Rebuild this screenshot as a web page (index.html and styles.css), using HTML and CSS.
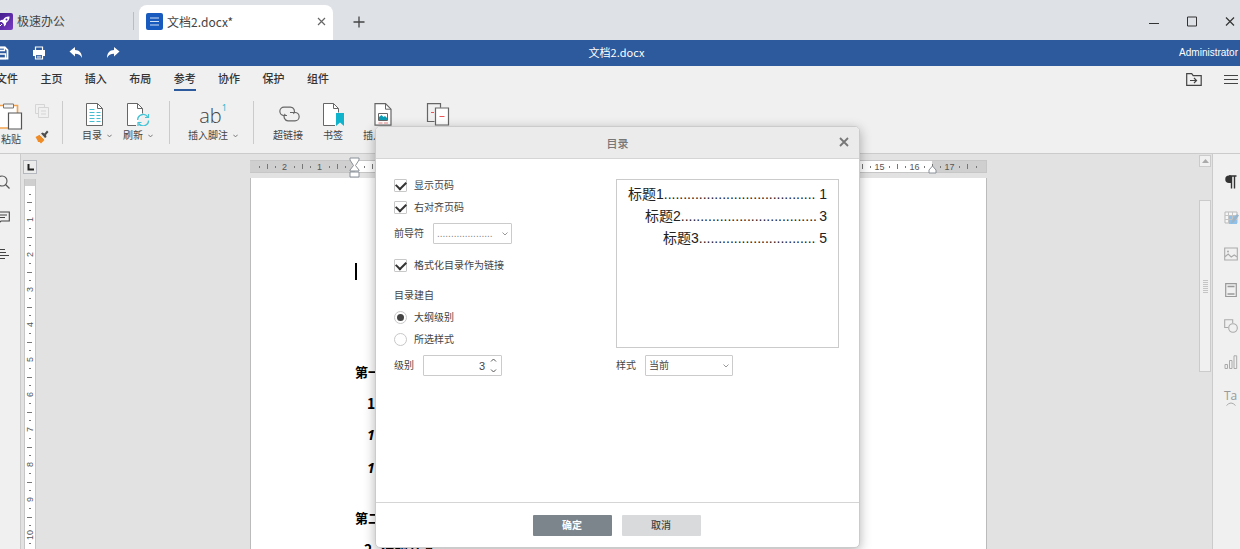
FILE: index.html
```html
<!DOCTYPE html>
<html lang="zh-CN">
<head>
<meta charset="utf-8">
<title>文档2.docx</title>
<link rel="stylesheet" href="styles.css">
</head>
<body>
<header class="titlebar">
  <div class="home-tab">
    <svg class="app-icon" viewBox="0 0 17 17"><defs><linearGradient id="pg" x1="0" y1="0" x2="1" y2="1"><stop offset="0" stop-color="#3c1a86"/><stop offset="1" stop-color="#7a3cc4"/></linearGradient></defs><rect width="17" height="17" rx="2" fill="url(#pg)"/><path d="M13.5 3.500c-3-.2-5 1-6.300 3.200l-2.400.4-1.300 1.900 2.300.1 2 2 .2 2.400 1.800-1.400.4-2.400c2.300-1.400 3.500-3.300 3.300-6.200z" fill="#fff"/><path d="M4 13l2-2" stroke="#fff"/><circle cx="10.500" cy="6.500" r="1" fill="#5a2ba5"/></svg>
    <span>极速办公</span>
  </div>
  <div class="doc-tab">
    <svg class="app-icon" viewBox="0 0 17 17"><rect width="17" height="17" rx="2" fill="#185abd"/><path d="M4 5h9M4 8.500h9M4 12h9" stroke="#cfe0f7" stroke-width="1.200"/></svg>
    <span>文档2.docx*</span>
    <button class="icon-button tab-close" aria-label="关闭标签"><svg width="9" height="9" viewBox="0 0 9 9"><path d="M1 1l7 7M8 1l-7 7" stroke="#666" stroke-width="1.200"/></svg></button>
  </div>
  <button class="icon-button new-tab" aria-label="新建"><svg width="12" height="12" viewBox="0 0 12 12"><path d="M6 .5v11M.5 6h11" stroke="#444" stroke-width="1.300"/></svg></button>
  <div class="window-controls">
    <button class="icon-button" aria-label="最小化"><svg width="10" height="11" viewBox="0 0 10 11"><path d="M0 7.500h10" stroke="#333"/></svg></button>
    <button class="icon-button" aria-label="最大化"><svg width="10" height="11" viewBox="0 0 10 11"><path d="M.5 1h9v9h-9z" fill="none" stroke="#333"/></svg></button>
    <button class="icon-button" aria-label="关闭"><svg width="10" height="11" viewBox="0 0 10 11"><path d="M1 1.500l8 8M9 1.500l-8 8" stroke="#333" stroke-width="1.200"/></svg></button>
  </div>
</header>

<div class="quickbar">
  <div class="quick-actions">
    <button class="icon-button" aria-label="保存"><svg width="14" height="14" viewBox="0 0 14 14"><path d="M1.500 1.500h8.500l2.500 2.500v8.500h-11z" fill="none" stroke="#fff" stroke-width="1.800"/><path d="M3.500 1.500h6v3h-6zM3.500 8h7v4.500h-7z" fill="none" stroke="#fff" stroke-width="1.300"/></svg></button>
    <button class="icon-button" aria-label="打印"><svg width="14" height="14" viewBox="0 0 14 14"><path d="M3.500 4V1h7v3M3.500 8.500h7v4.500h-7z" fill="none" stroke="#fff" stroke-width="1.200"/><path d="M1 4h12v6h-2V8H3v2H1z" fill="#fff"/><path d="M5 10.300h4M5 11.800h4" stroke="#fff" stroke-width=".7"/></svg></button>
    <button class="icon-button" aria-label="撤销"><svg width="14" height="12" viewBox="0 0 14 12"><path d="M.5 4.500L6 0v3c4.500 0 7 3 7 8-1.500-3-3.500-4.200-7-4.200V9.500z" fill="#fff"/></svg></button>
    <button class="icon-button" aria-label="重做"><svg width="14" height="12" viewBox="0 0 14 12"><path d="M13.500 4.500L8 0v3c-4.500 0-7 3-7 8 1.500-3 3.500-4.200 7-4.200V9.500z" fill="#fff"/></svg></button>
  </div>
  <span class="doc-name">文档2.docx</span>
  <span class="user-name">Administrator</span>
</div>

<nav class="menubar">
  <div class="menu-items">
    <a href="#">文件</a><a href="#">主页</a><a href="#">插入</a><a href="#">布局</a><a href="#" class="active">参考</a><a href="#">协作</a><a href="#">保护</a><a href="#">组件</a>
  </div>
  <div class="menu-right">
    <button class="icon-button" aria-label="打开文件位置"><svg width="16" height="13" viewBox="0 0 16 13"><path d="M.7.7h5l1.500 2h8v9.600H.7z" fill="none" stroke="#444" stroke-width="1.200"/><path d="M4 7.500h6M8 5l2.500 2.500L8 10" fill="none" stroke="#444" stroke-width="1.200"/></svg></button>
    <button class="icon-button" aria-label="更多"><svg width="14" height="10" viewBox="0 0 14 10"><path d="M0 .5h14M0 4.500h14M0 8.500h14" stroke="#444"/></svg></button>
  </div>
</nav>

<div class="toolbar">
  <div class="group group-clip">
    <button class="tool paste"><svg width="24" height="27" viewBox="0 0 24 27"><path d="M0 2.500h18.500V25H0z" fill="#fff" stroke="#f2a34e" stroke-width="1.600"/><path d="M4.500 1h10v4h-10z" fill="#f4f4f4" stroke="#777"/><path d="M9.500 10h13v16h-13z" fill="#fff" stroke="#555" stroke-width="1.200"/></svg><span>粘贴</span></button>
    <div class="small-tools">
      <button class="icon-button" aria-label="复制"><svg width="14" height="14" viewBox="0 0 14 14"><path d="M3.500 9.500h-3v-9h9v3M3.500 3.500h10v10h-10zM6 7h5M6 10h5" fill="none" stroke="#d5d5d5"/></svg></button>
      <button class="icon-button" aria-label="格式刷"><svg width="14" height="14" viewBox="0 0 14 14"><path d="M.5 7L5 4.500l5 5L6 13.500 4.500 12 3 12 2.500 10.500z" fill="#f08c28"/><path d="M6 3.500l1.500-1 2 1L12 .5l1.500 1.500-2.500 3 .5 2L10 8z" fill="#505050"/><path d="M4.500 4.500l5.500 5.500" stroke="#fff" stroke-width=".8"/></svg></button>
    </div>
  </div>
  <div class="group group-toc">
    <button class="tool"><svg width="24" height="23" viewBox="0 0 24 23"><path d="M1.500.5h11l5 5v17h-16z" fill="#fff" stroke="#666"/><path d="M12.500.5v5h5" fill="none" stroke="#666"/><path d="M4.500 6.500h5M4.500 9.500h5M4.500 12.500h5M4.500 15.500h5M4.500 18.500h5M11.500 9.500h4M11.500 12.500h4M11.500 15.500h4M11.500 18.500h4" stroke="#45bdd0" stroke-width="1.100"/></svg><span>目录<svg class="chev" width="5" height="4" viewBox="0 0 5 4"><path d="M.3.7l2.200 2.200L4.700.7" fill="none" stroke="#777"/></svg></span></button>
    <button class="tool"><svg width="24" height="23" viewBox="0 0 24 23"><path d="M10 22.500H1.500V.5h10l5 5v5" fill="#fff" stroke="#666"/><path d="M11.500.5v5h5" fill="none" stroke="#666"/><path d="M11.700 17a5.500 5.500 0 0 1 10-3.200M22.600 17.500a5.500 5.500 0 0 1-10 3" fill="none" stroke="#45c4d6" stroke-width="1.400"/><path d="M22.500 11v3.500h-3.500M12 23v-3.500h3.500" fill="none" stroke="#45c4d6" stroke-width="1.200"/></svg><span>刷新<svg class="chev" width="5" height="4" viewBox="0 0 5 4"><path d="M.3.7l2.200 2.200L4.700.7" fill="none" stroke="#777"/></svg></span></button>
  </div>
  <div class="group group-note">
    <button class="tool"><span class="ab-icon">ab<sup>1</sup></span><span>插入脚注<svg class="chev" width="5" height="4" viewBox="0 0 5 4"><path d="M.3.7l2.200 2.200L4.700.7" fill="none" stroke="#777"/></svg></span></button>
  </div>
  <div class="group group-link">
    <button class="tool"><svg width="24" height="23" viewBox="0 0 24 23"><path d="M11 12.500H8a4 4 0 0 1 0-8.300h6.500a4 4 0 0 1 3 6.600" fill="none" stroke="#666" stroke-width="1.200"/><path d="M14 9.500h5a4 4 0 0 1 0 8.300h-7a4 4 0 0 1-2.800-6.800" fill="none" stroke="#666" stroke-width="1.200"/></svg><span>超链接</span></button>
    <button class="tool"><svg width="24" height="23" viewBox="0 0 24 23"><path d="M14 22.500H2.500V.5h10l5 5v4" fill="#fff" stroke="#666"/><path d="M12.500.5v5h5" fill="none" stroke="#666"/><path d="M15 10h8v13l-4-3.500-4 3.500z" fill="#0fb3cc"/></svg><span>书签</span></button>
    <button class="tool"><svg width="18" height="23" viewBox="0 0 18 23"><path d="M1 .7h10.500l5.500 5.500v16H1z" fill="#fff" stroke="#666" stroke-width="1.200"/><path d="M11.500.7v5.500H17" fill="none" stroke="#666"/><path d="M4.500 10.500h9v7h-9z" fill="#fff" stroke="#666"/><path d="M5 17v-3l2.500-2 2 2 1.500-1 2 2v2z" fill="#0b9db5"/><path d="M4.500 20h4M10 20h4" stroke="#e88"/></svg><span>插入图表</span></button>
    <button class="tool cross" aria-label="比较"><svg width="24" height="23" viewBox="0 0 24 23"><path d="M8.500 18.500h-7V.7h13v4" fill="none" stroke="#666" stroke-width="1.200"/><path d="M9.500 5h13v17h-13z" fill="#fff" stroke="#666" stroke-width="1.200"/><path d="M5 9.500h3M13.500 13.500h5" stroke="#e55"/></svg></button>
  </div>
</div>

<main class="workspace">
  <aside class="left-rail">
    <button class="icon-button" aria-label="查找"><svg width="14" height="14" viewBox="0 0 14 14"><circle cx="6" cy="6" r="5" fill="none" stroke="#555" stroke-width="1.100"/><path d="M9.500 9.500l4 4" stroke="#555" stroke-width="1.200"/></svg></button>
    <button class="icon-button" aria-label="批注"><svg width="14" height="14" viewBox="0 0 14 14"><path d="M0 1h13.300v9H5l-3 3v-3H0" fill="none" stroke="#444" stroke-width="1.100"/><path d="M1 4h10M1 6.500h8" stroke="#444"/></svg></button>
    <button class="icon-button" aria-label="导航"><svg width="14" height="14" viewBox="0 0 14 14"><path d="M0 2.500h9M3 5.500h7M4 8.500h9M3 11.500h6" stroke="#444"/></svg></button>
  </aside>
  <div class="vruler-column">
    <button class="tab-stop" aria-label="制表位"><svg width="7" height="7" viewBox="0 0 7 7"><path d="M1.500 0v5.500H7" fill="none" stroke="#222" stroke-width="2"/></svg></button>
    <div class="vruler"><i class="margin"></i><i class="half"></i><b>1</b><b>2</b><b>3</b><b>4</b><b>5</b><b>6</b><b>7</b><b>8</b><b>9</b><b>10</b></div>
  </div>
  <div class="canvas">
    <div class="sheet">
      <div class="hruler"><i class="half"></i><b>2</b><b>1</b><b></b><b>1</b><b>2</b><b>3</b><b>4</b><b>5</b><b>6</b><b>7</b><b>8</b><b>9</b><b>10</b><b>11</b><b>12</b><b>13</b><b>14</b><b>15</b><b>16</b><b>17</b><i class="end"></i>
        <svg class="indent-left" width="11" height="22" viewBox="0 0 11 22"><path d="M1 1h9v2L6.500 8.500 10 13v1H1v-1l3.500-4.500L1 3zM1 15h9v5H1z" fill="#fff" stroke="#8a9099"/></svg>
        <svg class="indent-right" width="9" height="9" viewBox="0 0 9 9"><path d="M4.500 1L8 5v3H1V5z" fill="#fff" stroke="#8a9099"/></svg>
      </div>
      <article class="page">
        <div class="caret"></div>
        <h2>第一</h2>
        <h3>1</h3>
        <h4>1</h4>
        <h4>1</h4>
        <h2 class="next">第二</h2>
        <h3 class="last">2. 标题文本</h3>
      </article>
    </div>
  </div>
  <div class="scrollbar">
    <button class="scroll-up" aria-label="向上滚动"><svg width="7" height="4" viewBox="0 0 7 4"><path d="M0 4l3.500-4L7 4z" fill="#aaa"/></svg></button>
    <div class="thumb"><svg width="5" height="13" viewBox="0 0 5 13"><path d="M0 .5h5M0 2.500h5M0 4.500h5M0 6.500h5M0 8.500h5M0 10.500h5M0 12.500h5" stroke="#c4c4c4"/></svg></div>
  </div>
  <aside class="right-rail">
    <button class="icon-button" aria-label="段落"><svg width="14" height="14" viewBox="0 0 14 14"><path d="M7.500 1v12.500M10.500 1v12.500M5 1h7.500" stroke="#333" stroke-width="1.400"/><path d="M7 .5v7.500H5a3.700 3.700 0 0 1 0-7.500z" fill="#333"/></svg></button>
    <button class="icon-button" aria-label="表格"><svg width="15" height="14" viewBox="0 0 15 14"><path d="M1 1h12v11H1z" fill="#f6f6f6" stroke="#b9b9b9"/><path d="M5 5h8v8H5z" fill="#8fc1ea"/><path d="M1 4.500h12M1 8.500h12M4.500 1v11M8.500 1v11" stroke="#c4c4c4"/><path d="M7 13l1-4 5-6 2 1.500-5 6.500z" fill="#9ab4c8"/></svg></button>
    <button class="icon-button" aria-label="图片"><svg width="14" height="14" viewBox="0 0 14 14"><path d="M.7 1h12.600v12H.7zM.7 10l3.500-3 3 3 3-2 3 2" fill="none" stroke="#aaa" stroke-width="1.100"/><circle cx="4" cy="4.500" r="1" fill="#aaa"/></svg></button>
    <button class="icon-button" aria-label="页眉页脚"><svg width="14" height="14" viewBox="0 0 14 14"><path d="M1.700.7h10.600v13H1.700z" fill="none" stroke="#999" stroke-width="1.200"/><path d="M3.500 3.500h7M3.500 11h7" stroke="#999" stroke-width="1.400"/></svg></button>
    <button class="icon-button" aria-label="形状"><svg width="14" height="14" viewBox="0 0 14 14"><path d="M4 8.500H.7V.7h8V4" fill="none" stroke="#aaa" stroke-width="1.100"/><circle cx="9" cy="9" r="4.300" fill="none" stroke="#aaa" stroke-width="1.100"/></svg></button>
    <button class="icon-button" aria-label="图表"><svg width="14" height="14" viewBox="0 0 14 14"><path d="M1 9.500h2.500v4H1zM5.500 5.500H8v8H5.500zM10 .8h2.700v12.700H10z" fill="none" stroke="#aaa"/></svg></button>
    <button class="icon-button text-art" aria-label="艺术字"><span>Ta</span><svg width="10" height="4" viewBox="0 0 10 4"><path d="M.5 3.500q4.500-5 9 0" fill="none" stroke="#aaa"/></svg></button>
  </aside>
</main>

<section class="dialog" role="dialog" aria-labelledby="dlg-title">
  <header class="dialog-head"><h1 id="dlg-title">目录</h1><button class="icon-button dialog-close" aria-label="关闭对话框"><svg width="10" height="10" viewBox="0 0 10 10"><path d="M1 1l8 8M9 1l-8 8" stroke="#777" stroke-width="1.800"/></svg></button></header>
  <form class="dialog-body">
    <div class="col">
      <label class="check"><input type="checkbox" checked>显示页码</label>
      <label class="check"><input type="checkbox" checked>右对齐页码</label>
      <div class="field"><label for="leader">前导符</label><select id="leader" class="leader"><option>....................</option></select></div>
      <label class="check spaced"><input type="checkbox" checked>格式化目录作为链接</label>
      <div class="caption">目录建自</div>
      <label class="check"><input type="radio" name="src" checked>大纲级别</label>
      <label class="check"><input type="radio" name="src">所选样式</label>
      <div class="field"><label for="level">级别</label><span class="spin"><input id="level" type="text" value="3"><svg width="7" height="15" viewBox="0 0 7 15"><path d="M1 3.500L3.500 1 6 3.500M1 11.500L3.500 14 6 11.500" fill="none" stroke="#555"/></svg></span></div>
    </div>
    <div class="col">
      <div class="preview">
        <p><span>标题1.......................................</span><span>1</span></p>
        <p class="lv2"><span>标题2...................................</span><span>3</span></p>
        <p class="lv3"><span>标题3..............................</span><span>5</span></p>
      </div>
      <div class="field style-field"><label for="style">样式</label><select id="style" class="style"><option>当前</option></select></div>
    </div>
  </form>
  <footer class="dialog-foot"><button class="primary">确定</button><button class="plain">取消</button></footer>
</section>
</body>
</html>
```
FILE: styles.css
```css
* { box-sizing: border-box; }
body {
  margin: 0;
  height: 100vh;
  overflow: hidden;
  display: flex;
  flex-direction: column;
  background: #f0f0f0;
  color: #444;
  font: 10px/14px "Liberation Sans", "Noto Sans CJK SC", sans-serif;
}
h1, h2, h3, h4, p { margin: 0; }
button, input, select { font: inherit; color: inherit; }
svg { display: block; flex: none; }
.icon-button {
  border: 0;
  padding: 0;
  background: none;
  display: flex;
  align-items: center;
  justify-content: center;
}

.titlebar {
  flex: none;
  height: 40px;
  background: #dee1e6;
  display: flex;
  font: 12px/18px "Noto Sans CJK SC", sans-serif;
  color: #444;
}
.app-icon { width: 17px; height: 17px; }
.home-tab {
  display: flex;
  align-items: center;
  gap: 4px;
  width: 138px;
  margin: 12px 5px 10px -4px;
  border-right: 1px solid #bbbdc2;
}
.doc-tab {
  display: flex;
  align-items: center;
  gap: 4px;
  width: 194px;
  margin-top: 5px;
  padding: 0 7px 2px;
  background: #fff;
  border-radius: 8px 8px 0 0;
}
.tab-close { margin-left: auto; }
.new-tab { margin: 4px 0 0 20px; }
.window-controls {
  margin-left: auto;
  display: flex;
  gap: 28px;
  padding: 2px 5px 0 0;
}

.quickbar {
  flex: none;
  height: 26px;
  background: #2d5a9c;
  color: #fff;
  display: grid;
  grid-template-columns: 1fr auto 1fr;
  align-items: center;
}
.quick-actions { display: flex; gap: 23px; margin-left: -5px; }
.doc-name { font: 11px/16px "Noto Sans CJK SC", sans-serif; padding: 0 7px 2px 0; }
.user-name { justify-self: end; padding-right: 2px; font-size: 10px; }

.menubar {
  flex: none;
  height: 31px;
  display: flex;
  justify-content: space-between;
  align-items: center;
  padding-bottom: 6px;
}
.menu-items {
  display: flex;
  justify-content: space-between;
  width: 333px;
  margin-left: -4px;
  font: 500 11px/16px "Noto Sans CJK SC", sans-serif;
}
.menu-items a {
  color: #333;
  text-decoration: none;
  padding: 4px 0 3px;
  border-bottom: 2px solid transparent;
}
.menu-items .active { border-color: #2d5a9c; }
.menu-right { display: flex; gap: 22px; padding: 2px 2px 0 0; }

.toolbar {
  flex: none;
  height: 57px;
  display: flex;
  align-items: flex-start;
  padding-top: 4px;
  border-bottom: 1px solid #cbcbcb;
}
.group {
  display: flex;
  height: 43px;
  border-right: 1px solid #cbcbcb;
}
.group-clip { width: 63px; gap: 13px; }
.group-toc { padding: 0 16px 0 19px; gap: 11px; }
.group-note { padding: 0 15px 0 18px; }
.group-link { padding-left: 19px; gap: 18px; border: 0; }
.tool {
  border: 0;
  padding: 2px 0 0;
  background: none;
  display: flex;
  flex-direction: column;
  align-items: center;
  gap: 3px;
  white-space: nowrap;
}
.tool > span { display: flex; align-items: center; gap: 5px; }
.paste { width: 22px; }
.cross { width: 34px; }
.small-tools { display: flex; flex-direction: column; gap: 12px; padding-top: 3px; }
.tool .ab-icon {
  height: 23px;
  gap: 0;
  font: 300 20px/25px "Open Sans", sans-serif;
  align-items: flex-start;
}
.ab-icon sup { font: 9px/9px "Noto Sans", sans-serif; color: #2fb6cc; }

.workspace {
  flex: 1;
  min-height: 0;
  display: flex;
  background: #e2e2e2;
}
.left-rail {
  flex: none;
  width: 21px;
  padding-top: 21px;
  display: flex;
  flex-direction: column;
  align-items: flex-start;
  gap: 22px;
  background: #f0f0f0;
  border-right: 1px solid #cbcbcb;
}
.left-rail .icon-button { margin-left: -4px; }
.vruler-column {
  flex: none;
  width: 16px;
  margin-left: 1px;
  padding-top: 6px;
  display: flex;
  flex-direction: column;
  align-items: center;
  gap: 5px;
}
.tab-stop {
  width: 14px;
  height: 14px;
  padding: 3px;
  border: 1px solid #b5b8bf;
  background: #ececec;
}
.vruler {
  width: 12px;
  background: #fff;
  border: solid #c6c6c6;
  border-width: 0 1px;
  overflow: hidden;
}
.vruler .margin { display: block; height: 7px; background: #cfcfcf; }
.vruler .half {
  display: block;
  height: 16px;
  background: linear-gradient(#777, #777) center 8px / 2px 1px no-repeat;
}
.vruler b {
  display: block;
  height: 35px;
  width: 10px;
  text-align: center;
  writing-mode: vertical-rl;
  transform: rotate(180deg);
  font: 9px/10px "Liberation Sans", sans-serif;
  color: #555;
  background:
    linear-gradient(#777, #777) center 34px / 5px 1px no-repeat,
    linear-gradient(#777, #777) center 26px / 2px 1px no-repeat,
    linear-gradient(#777, #777) center 8px / 2px 1px no-repeat;
}
.canvas {
  flex: 1;
  min-width: 0;
  display: flex;
  justify-content: center;
  padding: 6px 0 0 34px;
  margin-right: 34px;
}
.sheet { width: 737px; display: flex; flex-direction: column; gap: 5px; }
.hruler {
  position: relative;
  height: 13px;
  display: flex;
  border: solid #c6c6c6;
  border-width: 1px 1px 1px 0;
  background: linear-gradient(90deg, #cfcfcf 105px, #fff 105px, #fff 682px, #cfcfcf 682px);
}
.hruler .half, .hruler .end {
  flex: none;
  width: 17px;
  background: linear-gradient(#777, #777) 9px center / 1px 2px no-repeat;
}
.hruler .end {
  background:
    linear-gradient(#777, #777) 0 center / 1px 5px no-repeat,
    linear-gradient(#777, #777) 9px center / 1px 2px no-repeat;
}
.hruler b {
  flex: none;
  width: 35px;
  text-align: center;
  font: 9px/12px "Liberation Sans", sans-serif;
  color: #555;
  background:
    linear-gradient(#777, #777) 0 center / 1px 5px no-repeat,
    linear-gradient(#777, #777) 8px center / 1px 2px no-repeat,
    linear-gradient(#777, #777) 27px center / 1px 2px no-repeat;
}
.indent-left { position: absolute; left: 99px; top: -4px; }
.indent-right { position: absolute; left: 678px; top: 4px; }
.page {
  flex: 1;
  min-height: 0;
  overflow: hidden;
  padding: 85px 0 0 104px;
  background: #fff;
  border: solid #bbb;
  border-width: 0 1px;
  color: #000;
  font-family: "Noto Sans CJK SC", sans-serif;
}
.caret { width: 2px; height: 17px; background: #000; margin-bottom: 82px; }
.page h2 { font-size: 13px; line-height: 20px; margin-bottom: 11px; }
.page h3 { font-size: 14px; line-height: 20px; margin: 0 0 12px 12px; }
.page h4 { font: italic bold 14px/20px "Noto Sans", sans-serif; margin: 0 0 13px 12px; }
.page .next { margin-top: 30px; }
.page .last { margin-left: 9px; }

.scrollbar {
  flex: none;
  width: 13px;
  padding-right: 1px;
  margin-top: 1px;
  display: flex;
  flex-direction: column;
  gap: 33px;
}
.scroll-up {
  height: 12px;
  padding: 0;
  border: 1px solid #cbcbcb;
  background: #f0f0f0;
  display: flex;
  align-items: center;
  justify-content: center;
}
.thumb {
  height: 172px;
  border: 1px solid #cbcbcb;
  background: #f0f0f0;
  display: flex;
  align-items: center;
  justify-content: center;
}
.right-rail {
  flex: none;
  width: 28px;
  padding: 21px 0 0 11px;
  display: flex;
  flex-direction: column;
  align-items: flex-start;
  gap: 22px;
  background: #f0f0f0;
  border-left: 1px solid #cbcbcb;
}
.right-rail .icon-button { height: 14px; }
.right-rail .text-art {
  flex-direction: column;
  font: 12px/12px "Open Sans", sans-serif;
  color: #999;
}

.dialog {
  position: absolute;
  top: 126px;
  left: calc(50% - 245px);
  width: 485px;
  background: #fff;
  border: 1px solid #cbcbcb;
  border-radius: 5px;
  box-shadow: 0 3px 12px rgba(0, 0, 0, 0.3);
}
.dialog-head {
  position: relative;
  height: 32px;
  display: flex;
  align-items: center;
  justify-content: center;
  background: #ebebeb;
  border-bottom: 1px solid #d5d5d5;
  border-radius: 4px 4px 0 0;
}
.dialog-head h1 { font: 500 11px/16px "Noto Sans CJK SC", sans-serif; color: #777; }
.dialog-close { position: absolute; right: 10px; top: 10px; }
.dialog-body {
  display: flex;
  justify-content: space-between;
  padding: 20px 20px 126px 18px;
}
.col { display: flex; flex-direction: column; gap: 9px; }
.check { display: flex; align-items: center; gap: 7px; height: 13px; }
.spaced { margin: 6px 0 8px; }
.caption { height: 13px; line-height: 13px; }
.check input {
  appearance: none;
  width: 13px;
  height: 13px;
  margin: 0;
  border: 1px solid #c8c8c8;
  border-radius: 1px;
  display: grid;
  place-items: center;
}
.check input[type="checkbox"]:checked::before {
  content: "";
  width: 8px;
  height: 5px;
  border: solid #333;
  border-width: 0 0 2px 2px;
  transform: translateY(-1px) rotate(-45deg);
}
.check input[type="radio"] { border-radius: 50%; }
.check input[type="radio"]:checked::before {
  content: "";
  width: 7px;
  height: 7px;
  border-radius: 50%;
  background: #444;
}
.field { display: flex; align-items: center; gap: 9px; height: 21px; }
.field select {
  appearance: none;
  height: 21px;
  padding: 0 14px 0 3px;
  border: 1px solid #cbcbcb;
  border-radius: 1px;
  background: url("data:image/svg+xml,%3Csvg xmlns='http://www.w3.org/2000/svg' width='6' height='4'%3E%3Cpath d='M.5.5L3 3 5.500.5' fill='none' stroke='%23999'/%3E%3C/svg%3E") right 3px center no-repeat #fff;
}
.field .leader { width: 79px; color: #888; }
.field .style { width: 88px; }
.spin {
  display: flex;
  align-items: center;
  width: 79px;
  height: 21px;
  padding-right: 4px;
  gap: 5px;
  border: 1px solid #cbcbcb;
  border-radius: 1px;
}
.spin input {
  flex: 1;
  min-width: 0;
  border: 0;
  padding: 0;
  outline: 0;
  text-align: right;
  background: none;
  font-size: 11px;
}
.preview {
  width: 223px;
  height: 169px;
  padding: 3px 11px;
  border: 1px solid #cbcbcb;
  color: #222;
  font-size: 14px;
  line-height: 22px;
}
.preview p { display: flex; justify-content: space-between; height: 22px; }
.preview .lv2 { padding-left: 17px; }
.preview .lv3 { padding-left: 35px; }
.style-field { margin-top: -2px; }
.dialog-foot {
  display: flex;
  justify-content: center;
  gap: 10px;
  padding: 12px 2px 11px 0;
  border-top: 1px solid #d5d5d5;
}
.dialog-foot button {
  width: 79px;
  height: 21px;
  padding: 0;
  border: 0;
  border-radius: 1px;
  font-weight: 500;
}
.dialog-foot .primary { background: #7d858c; color: #fff; font-weight: 700; }
.dialog-foot .plain { background: #d8dadc; }
```
